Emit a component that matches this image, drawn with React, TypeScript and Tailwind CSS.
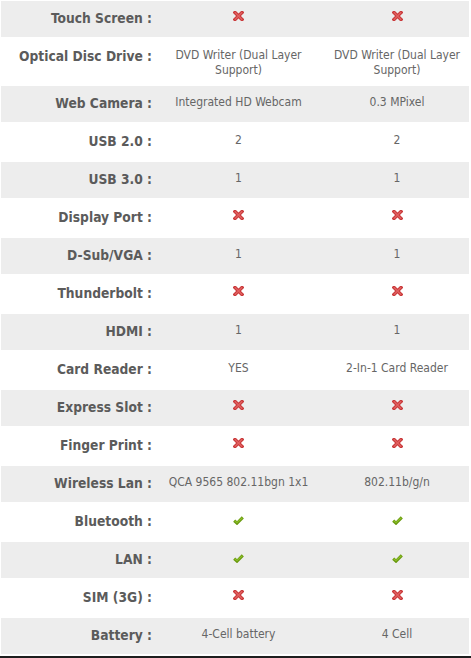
import React from "react";

type Cell = string | "X" | "V";

const rows: { label: string; a: Cell; b: Cell; tall?: boolean }[] = [
  { label: "Touch Screen :", a: "X", b: "X" },
  { label: "Optical Disc Drive :", a: "DVD Writer (Dual Layer Support)", b: "DVD Writer (Dual Layer Support)", tall: true },
  { label: "Web Camera :", a: "Integrated HD Webcam", b: "0.3 MPixel" },
  { label: "USB 2.0 :", a: "2", b: "2" },
  { label: "USB 3.0 :", a: "1", b: "1" },
  { label: "Display Port :", a: "X", b: "X" },
  { label: "D-Sub/VGA :", a: "1", b: "1" },
  { label: "Thunderbolt :", a: "X", b: "X" },
  { label: "HDMI :", a: "1", b: "1" },
  { label: "Card Reader :", a: "YES", b: "2-In-1 Card Reader" },
  { label: "Express Slot :", a: "X", b: "X" },
  { label: "Finger Print :", a: "X", b: "X" },
  { label: "Wireless Lan :", a: "QCA 9565 802.11bgn 1x1", b: "802.11b/g/n" },
  { label: "Bluetooth :", a: "V", b: "V" },
  { label: "LAN :", a: "V", b: "V" },
  { label: "SIM (3G) :", a: "X", b: "X" },
  { label: "Battery :", a: "4-Cell battery", b: "4 Cell" },
];

function Cross() {
  return (
    <svg width="11" height="10" viewBox="0 0 11 10" className="block mt-[1px]">
      <path d="M2 1.5 L9 8.5 M9 1.5 L2 8.5" stroke="#c9393a" strokeWidth="3.4" strokeLinecap="square" />
      <path d="M2.3 1.8 L8.7 8.2 M8.7 1.8 L2.3 8.2" stroke="#e06060" strokeWidth="1.4" strokeLinecap="square" />
    </svg>
  );
}

function Check() {
  return (
    <svg width="11" height="9" viewBox="0 0 11 9" className="block mt-[3px]">
      <path d="M1.2 4.6 L4 7.2 L9.8 1.4" fill="none" stroke="#6a9a10" strokeWidth="3" strokeLinejoin="miter" />
      <path d="M1.6 4.6 L4 6.6 L9.5 1.6" fill="none" stroke="#8fc22a" strokeWidth="1.1" />
    </svg>
  );
}

function Value({ v }: { v: Cell }) {
  if (v === "X") return <Cross />;
  if (v === "V") return <Check />;
  return <span className="block text-center">{v}</span>;
}

export default function App() {
  return (
    <div
      className="w-[471px] h-[658px] bg-white overflow-hidden"
      style={{ fontFamily: '"DejaVu Sans Condensed", "DejaVu Sans", sans-serif' }}
    >
      <div className="pl-[1px] pr-[2px]">
        {rows.map((r, i) => (
          <div
            key={r.label}
            className={`flex items-start border-y border-white ${r.tall ? "h-[47px]" : "h-[38px]"} ${
              i % 2 === 0 ? "bg-[#ededed]" : "bg-white"
            }`}
          >
            <div className="w-[159px] shrink-0 pr-[8px] pt-[9px] text-right text-[13.7px] leading-[16px] font-bold text-[#5b5b5b] font-stretch-condensed">
              {r.label}
            </div>
            <div className="w-[157px] shrink-0 pt-[9px] flex justify-center text-[12px] leading-[14.5px] text-[#666666] font-stretch-condensed">
              <Value v={r.a} />
            </div>
            <div className="flex-1 pl-[8px] pt-[9px] flex justify-center text-[12px] leading-[14.5px] text-[#666666] font-stretch-condensed">
              <Value v={r.b} />
            </div>
          </div>
        ))}
      </div>
      <div className="h-[2px] bg-[#1e1e1e] mt-[1px]" />
    </div>
  );
}
